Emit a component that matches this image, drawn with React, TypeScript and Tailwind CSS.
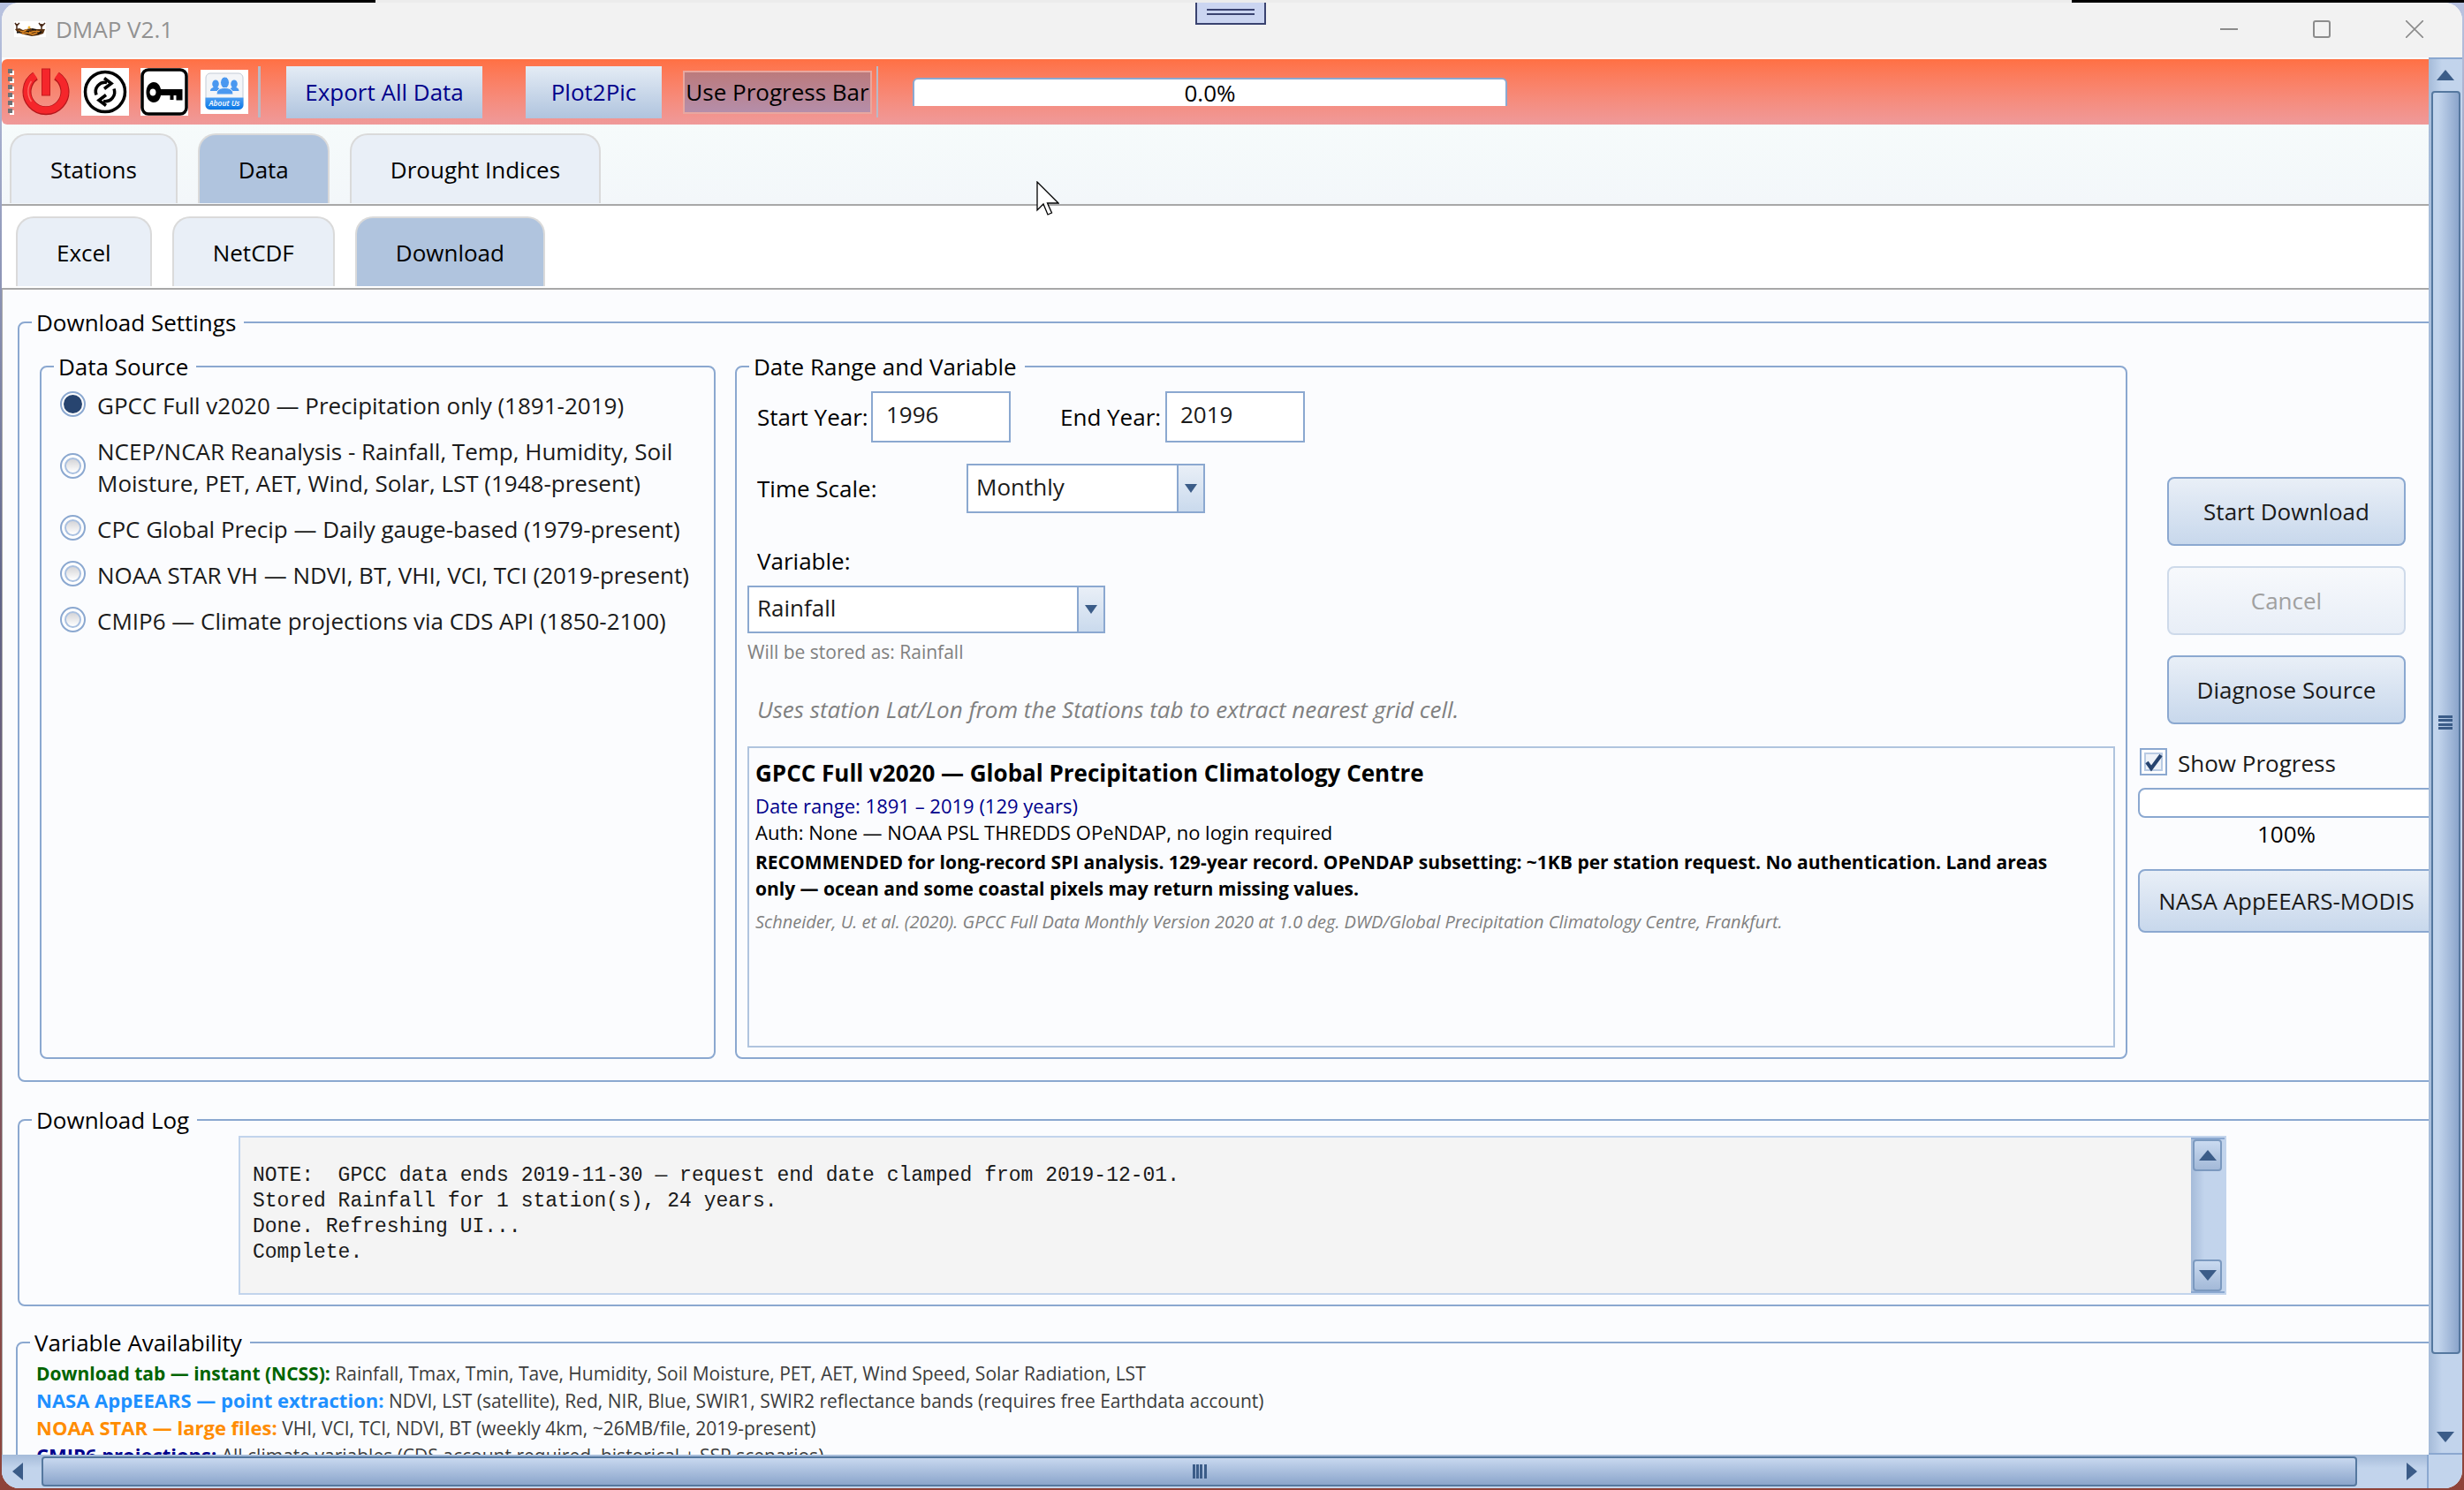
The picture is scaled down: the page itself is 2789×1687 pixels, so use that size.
import type { ReactNode } from 'react';

function GroupBox({ title, className = '', children }: { title: string; className?: string; children: ReactNode }) {
  return (
    <fieldset className={'min-w-0 rounded-lg border-2 border-[#8ba8d0] ' + className}>
      <legend className="ml-3.5 pl-[5px] pr-[9px] text-black">{title}</legend>
      {children}
    </fieldset>
  );
}

function Triangle({ dir, small = false }: { dir: 'up' | 'down' | 'left' | 'right'; small?: boolean }) {
  const points = { up: '0,12 10,0 20,12', down: '0,0 20,0 10,12', left: '12,0 12,20 0,10', right: '0,0 12,10 0,20' }[dir];
  const flat = dir === 'up' || dir === 'down';
  return (
    <svg
      aria-hidden="true"
      className={small ? 'h-2.5 w-3.5' : flat ? 'h-3 w-5' : 'h-5 w-3'}
      viewBox={flat ? '0 0 20 12' : '0 0 12 20'}
      preserveAspectRatio="none"
    >
      <polygon points={points} fill="#3b5c88" />
    </svg>
  );
}

function TitleBar() {
  return (
    <header className="flex h-[62px] shrink-0 items-center bg-[#f2f2f2] pb-0.5 pl-3.5 text-[#929292]">
      <svg aria-hidden="true" className="mr-[11px] h-[18px] w-9" viewBox="0 0 36 18">
        <rect width="36" height="18" fill="#fff" />
        <path d="M1 9 6 8l4 2 8-2 8 1 9 0-2 5-6 2-7 1-9-2-7-2z" fill="#5b3413" />
        <path d="M5 11l5 1 4-2 4 3 6-2 5 1M9 14l6-1 6 2 5-2" stroke="#e08a24" strokeWidth="1.5" fill="none" />
        <path d="M3 9V3M1 2l2 3 3-3M31 9V3M28 2l3 4 4-4M29 4h4" stroke="#4a2a18" strokeWidth="1.5" fill="none" />
        <path d="M3 13l4-1M14 11l3 1M20 9l5 1M27 14l4-2" stroke="#111" strokeWidth="1.5" />
        <circle cx="17" cy="7" r="1.5" fill="#f2b632" />
      </svg>
      <h1>DMAP V2.1</h1>
      <div className="mr-0.5 ml-auto flex">
        <button type="button" aria-label="Minimize" className="flex h-12 w-[105px] items-center justify-center">
          <svg className="size-5" viewBox="0 0 20 20" fill="none" stroke="#8c8c8c" strokeWidth="2"><path d="M0 10h20" /></svg>
        </button>
        <button type="button" aria-label="Maximize" className="flex h-12 w-[105px] items-center justify-center">
          <svg className="size-5" viewBox="0 0 20 20" fill="none" stroke="#8c8c8c" strokeWidth="2"><rect x="1" y="1" width="18" height="18" rx="2" /></svg>
        </button>
        <button type="button" aria-label="Close" className="flex h-12 w-[105px] items-center justify-center">
          <svg className="size-5" viewBox="0 0 20 20" fill="none" stroke="#8c8c8c" strokeWidth="1.6"><path d="M0 0l20 20M20 0L0 20" /></svg>
        </button>
      </div>
    </header>
  );
}

function ToolBar() {
  return (
    <div role="toolbar" className="mt-0.5 flex h-[74px] shrink-0 items-center rounded-l-md bg-linear-to-b from-[#ff7043] to-[#ef9a9a] pl-[7px]">
      <svg aria-hidden="true" className="mr-[9px] h-[52px] w-[7px]" viewBox="0 0 7 52">
        {[0, 9, 18, 27, 36, 45].map((y) => (
          <g key={y}>
            <rect x="2" y={y + 2} width="5" height="5" fill="#fff" />
            <rect x="0" y={y} width="5" height="5" fill="#6e7276" />
          </g>
        ))}
      </svg>
      <button type="button" aria-label="Exit">
        <svg className="h-[54px] w-[54px]" viewBox="0 0 54 54" fill="none">
          <path d="M15 9A21.500 21.500 0 1 0 39 9" stroke="#b3161b" strokeWidth="10" />
          <path d="M15 8.500A21.500 21.500 0 1 0 39 8.500" stroke="#f5262b" strokeWidth="8" />
          <path d="M10.500 15A20 20 0 0 0 10.500 38" stroke="#ff6a63" strokeWidth="1.500" />
          <rect x="22.500" y="1" width="9" height="30" fill="#f5262b" stroke="#c4181d" />
        </svg>
      </button>
      <button type="button" aria-label="Refresh" className="ml-[13px]">
        <svg className="h-[54px] w-[54px]" viewBox="0 0 54 54" fill="none" stroke="#000">
          <rect width="54" height="54" fill="#fff" stroke="none" />
          <circle cx="27" cy="27" r="22.500" strokeWidth="3.500" />
          <path d="M17 30.500A10.500 10.500 0 0 1 29 16.500M37 23.500A10.500 10.500 0 0 1 25 37.500" strokeWidth="3.500" />
          <path d="M26 11.500l8 6-8 6M28 30.500l-8 6 8 6" strokeWidth="3.500" />
        </svg>
      </button>
      <button type="button" aria-label="License key" className="ml-[13px]">
        <svg className="h-[54px] w-[54px]" viewBox="0 0 54 54">
          <rect width="54" height="54" fill="#fff" />
          <rect x="2" y="2" width="50" height="50" rx="7" fill="#fff" stroke="#000" strokeWidth="3.500" />
          <path fillRule="evenodd" d="M15 16c-5 0-8.500 5-8.500 11.500S10 39 15 39c4 0 7-3 8-8h10.500v5h4v-5h3v5.500h7V24H23c-1-5-4-8-8-8zm-1 7.500c2 0 3.500 1.500 3.500 4s-1.500 4-3.500 4-3.500-1.500-3.500-4 1.500-4 3.500-4z" />
        </svg>
      </button>
      <button type="button" aria-label="About us" className="ml-3.5">
        <svg className="h-[50px] w-[54px]" viewBox="0 0 54 50">
          <defs>
            <linearGradient id="about" x1="0" y1="0" x2="0" y2="1">
              <stop offset="0" stopColor="#4b9df2" />
              <stop offset="1" stopColor="#0a78e6" />
            </linearGradient>
          </defs>
          <rect width="54" height="50" fill="#fff" />
          <rect x="6" y="4" width="42" height="41" rx="5" fill="#f3f5f8" stroke="#c3cbd6" />
          <path d="M5.500 31.500h43V40a5 5 0 0 1-5 5h-33a5 5 0 0 1-5-5z" fill="url(#about)" />
          <g fill="#4a98f0">
            <ellipse cx="17" cy="16" rx="3.800" ry="4.500" />
            <ellipse cx="38" cy="16" rx="3.800" ry="4.500" />
            <path d="M11 24c0-3 3-4.500 6-4.500s5 1.500 5 4.500zM33 24c0-3 2-4.500 5-4.500s5.500 1.500 5.500 4.500z" />
            <ellipse cx="27.500" cy="14.500" rx="5" ry="6.500" stroke="#f3f5f8" />
            <path d="M18 28c0-6 5-7.500 9.500-7.500S37 22 37 28z" stroke="#f3f5f8" />
          </g>
          <text x="27" y="40.500" textAnchor="middle" fontSize="8.500" fontStyle="italic" fontWeight="600" fill="#fff">About Us</text>
        </svg>
      </button>
      <span className="ml-[11px] h-[58px] w-[3px] bg-[#b9b9c6]" />
      <button type="button" className="ml-[29px] h-[59px] w-[222px] bg-linear-to-b from-[#e4ecf5] to-[#b0c4de] text-[#00008b]">Export All Data</button>
      <button type="button" className="ml-[49px] h-[59px] w-[154px] bg-linear-to-b from-[#e4ecf5] to-[#b0c4de] text-[#00008b]">Plot2Pic</button>
      <button type="button" className="ml-6 h-[49px] w-[214px] border-2 border-[#e8a79f] bg-linear-to-b from-[#bb7a7c] to-[#b58eaa] whitespace-nowrap text-black">Use Progress Bar</button>
      <span className="ml-[5px] h-[58px] w-0.5 bg-[#b9b9c6]" />
      <div
        role="progressbar"
        aria-valuenow={0}
        className="ml-[39px] flex h-8 w-[673px] items-center justify-center rounded-t-md border-2 border-b-0 border-[#8ba8d0] bg-white text-black"
      >
        0.0%
      </div>
    </div>
  );
}

function TabRow({ tabs, active, label, className }: { tabs: string[]; active: string; label: string; className: string }) {
  return (
    <nav role="tablist" aria-label={label} className={'flex shrink-0 items-start gap-[23px] border-b-2 border-[#a8a8a8] ' + className}>
      {tabs.map((tab) => (
        <button
          key={tab}
          type="button"
          role="tab"
          aria-selected={tab === active}
          className={
            'h-[79px] rounded-t-[20px] border-2 border-b-0 border-[#dadada] px-11 text-black ' +
            (tab === active ? 'bg-[#b0c4de]' : 'bg-[#e9eff7]')
          }
        >
          {tab}
        </button>
      ))}
    </nav>
  );
}

const sources: { id: string; text: ReactNode }[] = [
  { id: 'gpcc', text: 'GPCC Full v2020 — Precipitation only (1891-2019)' },
  { id: 'ncep', text: <>NCEP/NCAR Reanalysis - Rainfall, Temp, Humidity, Soil<br />Moisture, PET, AET, Wind, Solar, LST (1948-present)</> },
  { id: 'cpc', text: 'CPC Global Precip — Daily gauge-based (1979-present)' },
  { id: 'star', text: 'NOAA STAR VH — NDVI, BT, VHI, VCI, TCI (2019-present)' },
  { id: 'cmip6', text: 'CMIP6 — Climate projections via CDS API (1850-2100)' },
];

function DataSource() {
  return (
    <GroupBox title="Data Source" className="w-[765px] shrink-0">
      <div className="flex flex-col gap-4 pt-2 pl-[21px] text-[#1a1a1a]">
        {sources.map((s) => (
          <label key={s.id} className="flex items-center gap-[13px] whitespace-nowrap">
            <input
              type="radio"
              name="source"
              defaultChecked={s.id === 'gpcc'}
              className="mb-1 grid size-[29px] shrink-0 appearance-none place-items-center rounded-full border-2 border-[#8ba8d0] bg-white before:size-[19px] before:rounded-full before:border-2 before:border-[#a9c0e0] before:bg-linear-to-b before:from-[#d5d5d8] before:to-white checked:before:size-[21px] checked:before:border-0 checked:before:bg-[#27446f] checked:before:bg-none"
            />
            <span>{s.text}</span>
          </label>
        ))}
      </div>
    </GroupBox>
  );
}

function Combo({ id, value, className }: { id: string; value: string; className: string }) {
  return (
    <div className={'relative ' + className}>
      <select id={id} defaultValue={value} className="size-full appearance-none border-2 border-[#8ba8d0] bg-white pb-1 pl-[9px] text-[#1a1a1a]">
        <option>{value}</option>
      </select>
      <span className="pointer-events-none absolute inset-y-0 right-0 flex w-8 items-center justify-center border-2 border-[#8ba8d0] bg-linear-to-b from-[#e9eff7] to-[#cadaed]">
        <Triangle dir="down" small />
      </span>
    </div>
  );
}

function DateRange() {
  return (
    <GroupBox title="Date Range and Variable" className="flex-1">
      <div className="flex flex-col px-3 pt-2.5 pb-[11px]">
        <div className="flex h-[58px] items-center pl-[11px] text-black">
          <label htmlFor="start" className="w-[129px]">Start Year:</label>
          <input id="start" defaultValue="1996" className="h-full w-[158px] border-2 border-[#8ba8d0] bg-white pb-1.5 pl-[15px] text-[#1a1a1a]" />
          <label htmlFor="end" className="ml-14 w-[119px]">End Year:</label>
          <input id="end" defaultValue="2019" className="h-full w-[158px] border-2 border-[#8ba8d0] bg-white pb-1.5 pl-[15px] text-[#1a1a1a]" />
        </div>
        <div className="mt-6 flex items-center pl-[11px] text-black">
          <label htmlFor="scale" className="w-[237px]">Time Scale:</label>
          <Combo id="scale" value="Monthly" className="h-14 w-[270px]" />
        </div>
        <label htmlFor="variable" className="mt-9 pl-[11px] text-black">Variable:</label>
        <Combo id="variable" value="Rainfall" className="mt-2.5 h-[54px] w-[405px]" />
        <p className="mt-1.5 text-[21px] leading-[30px] text-[#808080]">Will be stored as: Rainfall</p>
        <p className="mt-8 pl-[11px] text-[#808080] italic">Uses station Lat/Lon from the Stations tab to extract nearest grid cell.</p>
        <article className="mt-6 min-h-[341px] border-2 border-[#b0c4de] px-[7px] pt-2.5 text-[22px] leading-[30px] text-black">
          <h2 className="text-[26px] leading-9 font-bold">GPCC Full v2020 — Global Precipitation Climatology Centre</h2>
          <p className="mt-1 text-[#00008b]">Date range: 1891 – 2019 (129 years)</p>
          <p>Auth: None — NOAA PSL THREDDS OPeNDAP, no login required</p>
          <p className="mt-1 text-[21px] font-bold whitespace-nowrap">
            RECOMMENDED for long-record SPI analysis. 129-year record. OPeNDAP subsetting: ~1KB per station request. No authentication. Land areas<br />
            only — ocean and some coastal pixels may return missing values.
          </p>
          <p className="mt-2 text-[20px] text-[#808080] italic">
            Schneider, U. et al. (2020). GPCC Full Data Monthly Version 2020 at 1.0 deg. DWD/Global Precipitation Climatology Centre, Frankfurt.
          </p>
        </article>
      </div>
    </GroupBox>
  );
}

function Actions() {
  return (
    <div className="flex w-[336px] shrink-0 flex-col justify-center text-[#1a1a1a]">
      <button type="button" className="mx-[33px] h-[78px] rounded-lg border-2 border-[#8ba8d0] bg-linear-to-b from-[#e9eff7] to-[#c8d8ec]">Start Download</button>
      <button type="button" disabled className="mx-[33px] mt-[23px] h-[78px] rounded-lg border-2 border-[#cedaea] bg-linear-to-b from-[#f7f9fc] to-[#e8eef7] text-[#a0a0a0]">Cancel</button>
      <button type="button" className="mx-[33px] mt-[23px] h-[78px] rounded-lg border-2 border-[#8ba8d0] bg-linear-to-b from-[#e9eff7] to-[#c8d8ec]">Diagnose Source</button>
      <label className="mt-[26px] flex items-center gap-3 pl-0.5">
        <span className="relative mb-1 size-[31px]">
          <input type="checkbox" defaultChecked className="block size-full appearance-none border-2 border-[#8ba8d0] bg-[#eef2f8] shadow-[inset_0_0_0_3px_#fff,inset_0_0_0_5px_#b9cbe4]" />
          <svg aria-hidden="true" className="pointer-events-none absolute inset-0 size-full" viewBox="0 0 31 31" fill="none">
            <path d="M8 16l5 7L24 8" stroke="#27446f" strokeWidth="4" />
          </svg>
        </span>
        Show Progress
      </label>
      <div role="progressbar" aria-valuenow={0} aria-label="Download progress" className="mt-2.5 h-[34px] rounded-lg border-2 border-[#8ba8d0] bg-white" />
      <p className="text-center text-black">100%</p>
      <button type="button" className="mt-[22px] h-[72px] rounded-lg border-2 border-[#8ba8d0] bg-linear-to-b from-[#e9eff7] to-[#c8d8ec] whitespace-nowrap">NASA AppEEARS-MODIS</button>
    </div>
  );
}

const log = `
NOTE:  GPCC data ends 2019-11-30 — request end date clamped from 2019-12-01.
Stored Rainfall for 1 station(s), 24 years.
Done. Refreshing UI...
Complete.`;

function DownloadLog() {
  return (
    <GroupBox title="Download Log" className="mt-[25px]">
      <div className="mr-[259px] mb-[11px] ml-[248px] flex h-[180px] border-2 border-[#c2d4ec] bg-[#f4f4f4]">
        <textarea
          aria-label="Download log"
          readOnly
          value={log}
          className="flex-1 resize-none overflow-hidden px-3.5 pt-0 font-['Liberation_Mono',monospace] text-[23px] leading-[29px] text-[#1a1a1a]"
        />
        <div className="flex w-[38px] flex-col justify-between border-y-2 border-[#8ba8d0] bg-linear-to-r from-[#a5bbd9] to-[#c2d4ec] to-40% pl-0.5">
          <button type="button" aria-label="Scroll log up" className="flex h-9 w-[33px] items-center justify-center rounded border-2 border-[#7b99bf] bg-linear-to-b from-[#cadaf0] to-[#a3b9d8]"><Triangle dir="up" /></button>
          <button type="button" aria-label="Scroll log down" className="flex h-9 w-[33px] items-center justify-center rounded border-2 border-[#7b99bf] bg-linear-to-b from-[#cadaf0] to-[#a3b9d8]"><Triangle dir="down" /></button>
        </div>
      </div>
    </GroupBox>
  );
}

function Availability() {
  return (
    <GroupBox title="Variable Availability" className="mt-[23px] -ml-0.5">
      <div className="px-[21px] pt-0.5 pb-6 text-[21px] leading-[30px] text-[#3c3c3c]">
        <p><b className="text-[#006400]">Download tab — instant (NCSS):</b> Rainfall, Tmax, Tmin, Tave, Humidity, Soil Moisture, PET, AET, Wind Speed, Solar Radiation, LST</p>
        <p><b className="text-[22px] text-[#1e90ff]">NASA AppEEARS — point extraction:</b> NDVI, LST (satellite), Red, NIR, Blue, SWIR1, SWIR2 reflectance bands (requires free Earthdata account)</p>
        <p><b className="text-[22px] text-[#ff8c00]">NOAA STAR — large files:</b> VHI, VCI, TCI, NDVI, BT (weekly 4km, ~26MB/file, 2019-present)</p>
        <p><b className="text-[22px] text-[#00008b]">CMIP6 projections:</b> All climate variables (CDS account required, historical + SSP scenarios)</p>
      </div>
    </GroupBox>
  );
}

function Grip({ vertical = false }: { vertical?: boolean }) {
  return (
    <span className={vertical ? 'flex h-4 w-4 flex-col justify-between' : 'flex h-4 w-4 justify-between'}>
      {[0, 1, 2, 3].map((i) => (
        <i key={i} className={vertical ? 'h-[3px] w-full bg-[#3b5c88]' : 'h-full w-[3px] bg-[#3b5c88]'} />
      ))}
    </span>
  );
}

export default function App() {
  return (
    <div className="relative flex h-screen w-full flex-col overflow-hidden bg-linear-to-b from-[#b9c3e0] via-[#5f6488] via-40% to-[#8f4339] px-0.5 font-['Open_Sans','Noto_Sans',sans-serif] text-[26px] leading-9">
      <div className="flex h-[3px] shrink-0 justify-between bg-[#ececec]">
        <span className="-ml-0.5 w-[425px] bg-black" />
        <span className="-mr-0.5 w-[444px] bg-black" />
      </div>
      <div className="mb-0.5 flex min-h-0 flex-1 flex-col overflow-hidden rounded-[20px] bg-[#fafbfd]">
        <TitleBar />
        <div className="flex min-h-0 flex-1">
          <main className="flex min-w-0 flex-1 flex-col overflow-hidden">
            <ToolBar />
            <TabRow label="Sections" tabs={['Stations', 'Data', 'Drought Indices']} active="Data" className="h-[92px] bg-linear-to-b from-[#f6fbfb] to-[#f3f7fa] pt-2.5 pl-[9px]" />
            <TabRow label="Data pages" tabs={['Excel', 'NetCDF', 'Download']} active="Download" className="h-[95px] bg-white pt-3 pl-4" />
            <div className="min-h-0 flex-1 overflow-hidden border-l border-[#a8a8a8] bg-[#fbfcfe]">
              <div className="w-[calc(100%+40px)] pt-[19px] pr-2 pl-[17px]">
                <GroupBox title="Download Settings">
                  <div className="flex px-[23px] pt-3.5 pb-6">
                    <DataSource />
                    <div className="w-[22px] shrink-0" />
                    <DateRange />
                    <div className="w-3 shrink-0" />
                    <Actions />
                  </div>
                </GroupBox>
                <DownloadLog />
                <Availability />
              </div>
            </div>
          </main>
          <div className="flex w-[38px] shrink-0 flex-col items-center border-y-2 border-[#8ba8d0] bg-linear-to-r from-[#a5bbd9] to-[#c2d4ec] to-40%">
            <button type="button" aria-label="Scroll up" className="flex h-9 w-full shrink-0 items-center justify-center"><Triangle dir="up" /></button>
            <div className="flex w-[33px] flex-[1428] items-center justify-center rounded border-2 border-[#55789f] bg-linear-to-r from-[#c2d4ec] from-20% to-[#8ba5cb]"><Grip vertical /></div>
            <div className="flex-[76]" />
            <button type="button" aria-label="Scroll down" className="flex h-9 w-full shrink-0 items-center justify-center"><Triangle dir="down" /></button>
          </div>
        </div>
        <div className="flex h-[38px] shrink-0 bg-[#c2d4ec]">
          <div className="flex min-w-0 flex-1 items-center border-r-2 border-[#8ba8d0] bg-linear-to-b from-[#a5bbd9] to-[#c2d4ec] to-40%">
            <button type="button" aria-label="Scroll left" className="flex h-full w-[45px] shrink-0 items-center pl-3"><Triangle dir="left" /></button>
            <div className="flex h-[34px] flex-[2621] items-center justify-center rounded border-2 border-[#55789f] bg-linear-to-b from-[#c8d8ef] to-[#8ba5cb]"><Grip /></div>
            <div className="flex-[36]" />
            <button type="button" aria-label="Scroll right" className="flex h-full w-[43px] shrink-0 items-center justify-center pl-2"><Triangle dir="right" /></button>
          </div>
          <div className="w-[38px] shrink-0" />
        </div>
      </div>
      <div className="absolute top-[3px] left-[1353px] flex h-[25px] w-20 flex-col items-center gap-[3px] border-2 border-t-0 border-[#3a4370] bg-[#cbd5f1] pt-[7px]">
        <span className="h-0.5 w-[54px] bg-[#3a4370]" />
        <span className="h-0.5 w-[54px] bg-[#3a4370]" />
      </div>
      <svg aria-hidden="true" className="pointer-events-none absolute top-[205px] left-[1173px] h-[39px] w-[26px]" viewBox="0 0 26 39">
        <path d="M1 1v32l7-7 5 12 4.500-2L12.500 25H25z" fill="#fff" stroke="#000" strokeWidth="1.300" />
      </svg>
    </div>
  );
}
